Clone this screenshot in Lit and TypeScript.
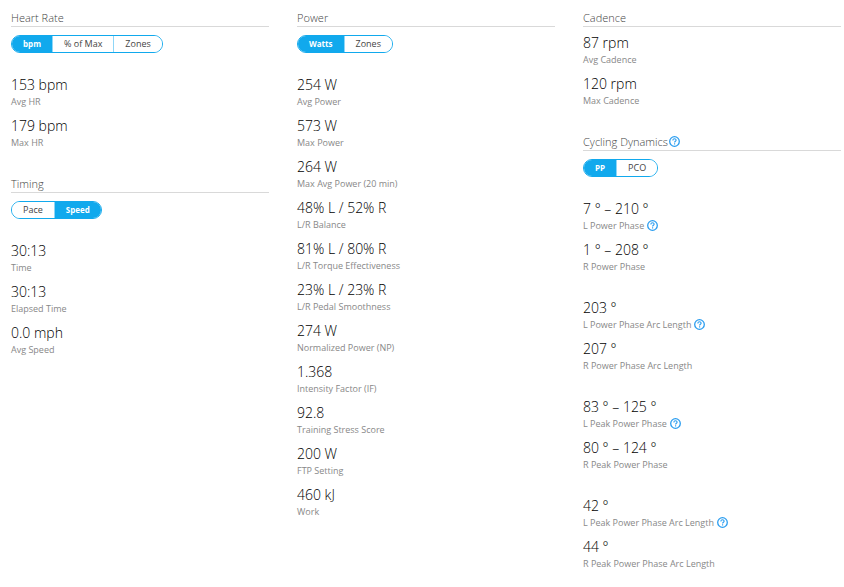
import { LitElement, html, css, svg, nothing } from "lit";
import { customElement, property } from "lit/decorators.js";
import { classMap } from "lit/directives/class-map.js";

interface Stat {
  value: string;
  label: string;
  help?: boolean;
}

interface Section {
  title: string;
  help?: boolean;
  options?: string[];
  selected?: string;
  groups: Stat[][];
}

const stat = (value: string, label: string, help = false): Stat => ({ value, label, help });

const COLUMNS: Section[][] = [
  [
    {
      title: "Heart Rate",
      options: ["bpm", "% of Max", "Zones"],
      selected: "bpm",
      groups: [[stat("153 bpm", "Avg HR"), stat("179 bpm", "Max HR")]],
    },
    {
      title: "Timing",
      options: ["Pace", "Speed"],
      selected: "Speed",
      groups: [[stat("30:13", "Time"), stat("30:13", "Elapsed Time"), stat("0.0 mph", "Avg Speed")]],
    },
  ],
  [
    {
      title: "Power",
      options: ["Watts", "Zones"],
      selected: "Watts",
      groups: [
        [
          stat("254 W", "Avg Power"),
          stat("573 W", "Max Power"),
          stat("264 W", "Max Avg Power (20 min)"),
          stat("48% L / 52% R", "L/R Balance"),
          stat("81% L / 80% R", "L/R Torque Effectiveness"),
          stat("23% L / 23% R", "L/R Pedal Smoothness"),
          stat("274 W", "Normalized Power (NP)"),
          stat("1.368", "Intensity Factor (IF)"),
          stat("92.8", "Training Stress Score"),
          stat("200 W", "FTP Setting"),
          stat("460 kJ", "Work"),
        ],
      ],
    },
  ],
  [
    {
      title: "Cadence",
      groups: [[stat("87 rpm", "Avg Cadence"), stat("120 rpm", "Max Cadence")]],
    },
    {
      title: "Cycling Dynamics",
      help: true,
      options: ["PP", "PCO"],
      selected: "PP",
      groups: [
        [stat("7 ° – 210 °", "L Power Phase", true), stat("1 ° – 208 °", "R Power Phase")],
        [stat("203 °", "L Power Phase Arc Length", true), stat("207 °", "R Power Phase Arc Length")],
        [stat("83 ° – 125 °", "L Peak Power Phase", true), stat("80 ° – 124 °", "R Peak Power Phase")],
        [stat("42 °", "L Peak Power Phase Arc Length", true), stat("44 °", "R Peak Power Phase Arc Length")],
      ],
    },
  ],
];

@customElement("help-button")
export class HelpButton extends LitElement {
  @property() topic = "";

  static styles = css`
    :host {
      display: inline-flex;
      flex: none;
    }
    .help {
      display: block;
      width: 11px;
      height: 11px;
      padding: 0;
      border: 0;
      background: none;
      cursor: pointer;
    }
    .icon {
      display: block;
      width: 11px;
      height: 11px;
      overflow: visible;
    }
  `;

  render() {
    return html`<button class="help" type="button" aria-label="Help: ${this.topic}">
      ${svg`<svg class="icon" viewBox="0 0 11 11" fill="none" stroke="#2a9df0" aria-hidden="true">
        <circle cx="5.5" cy="5.5" r="4.8" stroke-width="1.3" />
        <path d="M3.9 4.4C3.9 3.3 4.6 2.8 5.5 2.8S7.1 3.4 7.1 4.2C7.1 5.2 5.6 5.3 5.6 6.5" stroke-width="1.1" />
        <path d="M5.6 7.3V8.4" stroke-width="1.1" />
      </svg>`}
    </button>`;
  }
}

@customElement("stat-section")
export class StatSection extends LitElement {
  @property({ attribute: false }) section!: Section;
  @property() selected = "";

  static styles = css`
    :host {
      display: block;
    }
    .title {
      display: flex;
      align-items: center;
      gap: 1px;
      margin: 0 0 6px;
      border-bottom: 1px solid #d9d9d9;
      font-size: 11px;
      font-weight: 300;
      line-height: 17px;
      color: #444;
    }
    .switch {
      display: inline-flex;
      box-sizing: border-box;
      height: 18px;
      margin: 2px 0 22px;
      border: 1px solid #11a9ed;
      border-radius: 9px;
      overflow: hidden;
      vertical-align: top;
    }
    .option {
      padding: 0 11px;
      border: 0;
      background: #fff;
      color: #444;
      font: 400 9px/16px "Open Sans", sans-serif;
      cursor: pointer;
    }
    .option + .option {
      border-left: 1px solid #8fd6f7;
    }
    .option.on {
      background: #11a9ed;
      color: #fff;
      font-size: 8px;
      font-weight: 700;
    }
    .group {
      display: grid;
      gap: 8px;
      margin: 0;
    }
    .group + .group {
      margin-top: 25px;
    }
    .stat {
      display: flex;
      flex-direction: column-reverse;
    }
    .value {
      margin: 0;
      font-size: 14px;
      font-weight: 300;
      line-height: 20px;
      color: #000;
    }
    .label {
      display: flex;
      align-items: center;
      gap: 3px;
      font-size: 9px;
      line-height: 13px;
      color: #888;
    }
  `;

  private renderSwitch(options: string[]) {
    const current = this.selected || this.section.selected;
    return html`<div class="switch" role="group" aria-label=${this.section.title}>
      ${options.map(
        (option) => html`<button
          type="button"
          class=${classMap({ option: true, on: option === current })}
          aria-pressed=${option === current}
          @click=${() => (this.selected = option)}
        >${option}</button>`
      )}
    </div>`;
  }

  render() {
    const { title, help, options, groups } = this.section;
    return html`
      <h2 class="title">
        ${title}${help ? html`<help-button topic=${title}></help-button>` : nothing}
      </h2>
      ${options ? this.renderSwitch(options) : nothing}
      ${groups.map(
        (group) => html`<dl class="group">
          ${group.map(
            (s) => html`<div class="stat">
              <dt class="label">
                ${s.label}${s.help ? html`<help-button topic=${s.label}></help-button>` : nothing}
              </dt>
              <dd class="value">${s.value}</dd>
            </div>`
          )}
        </dl>`
      )}
    `;
  }
}

@customElement("app-root")
export class AppRoot extends LitElement {
  static styles = css`
    :host {
      display: block;
      background: #fff;
      font-family: "Open Sans", sans-serif;
    }
    .columns {
      display: grid;
      grid-template-columns: repeat(3, minmax(0, 1fr));
      gap: 28px;
      padding: 9px 3px 9px 11px;
    }
    .column {
      display: flex;
      flex-direction: column;
      gap: 26px;
    }
  `;

  render() {
    return html`<main class="columns">
      ${COLUMNS.map(
        (sections) => html`<div class="column">
          ${sections.map((section) => html`<stat-section .section=${section}></stat-section>`)}
        </div>`
      )}
    </main>`;
  }
}
